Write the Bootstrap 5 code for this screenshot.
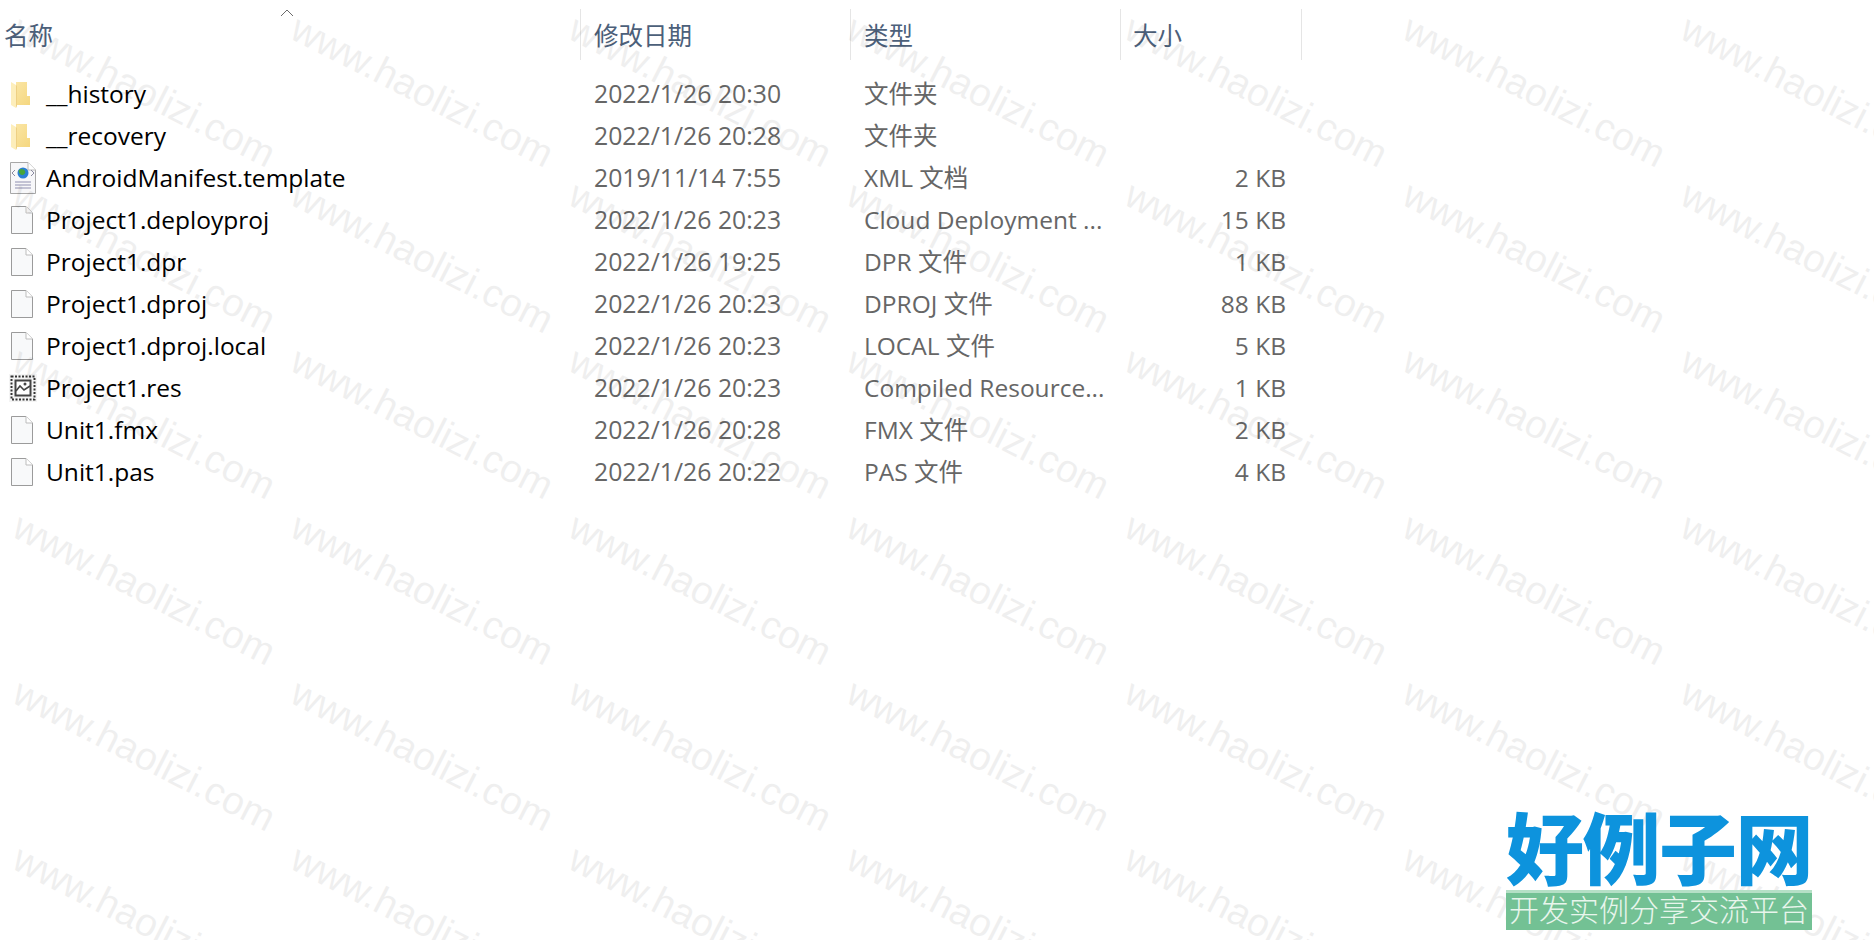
<!DOCTYPE html>
<html lang="zh-CN">
<head>
    <meta charset="UTF-8">
    <title>文件列表</title>
    <link href="https://cdn.jsdelivr.net/npm/bootstrap@5.3.0/dist/css/bootstrap.min.css" rel="stylesheet">
    <style>
        body {
            background-color: #fff;
            font-family: "Open Sans", "Noto Sans CJK SC", sans-serif;
            font-size: 24.5px;
            overflow: hidden;
            height: 940px;
        }
        .file-head { height: 73px; padding-top: 9px; color: #4c607a; position: relative; }
        .file-head .col-cell { height: 51px; border-right: 1px solid #e5e5e5; padding-top: 4px; }
        .file-row { height: 42px; color: #000; }
        .col-cell { flex: none; white-space: nowrap; overflow: hidden; }
        .col-name { width: 581px; }
        .col-date { width: 270px; padding-left: 13px; }
        .col-type { width: 270px; padding-left: 13px; }
        .col-size { width: 181px; padding-right: 16px; text-align: right; }
        .file-head .col-size { padding-left: 12px; }
        .file-row .col-date { font-size: 24.8px; }
        .file-row .col-date, .file-row .col-type, .file-row .col-size { color: #666; }
        .file-head .col-name { padding-left: 4px; }
        .file-icon { width: 46px; flex: none; }
        .sort-caret { position: absolute; left: 280px; top: 9px; }
        .wm-layer { position: absolute; inset: 0; overflow: hidden; pointer-events: none; }
        .wm-text {
            position: absolute;
            font-family: "Liberation Sans", sans-serif;
            font-size: 39px;
            color: #000;
            opacity: .06;
            white-space: nowrap;
            transform: rotate(27deg);
            transform-origin: 0 0;
        }
        .site-logo { position: absolute; left: 1506px; top: 801px; width: 306px; }
        .logo-name {
            font-family: "Noto Sans CJK SC", sans-serif;
            font-weight: 900;
            font-size: 78px;
            line-height: 89px;
            letter-spacing: -1.5px;
            color: #0d93dd;
            white-space: nowrap;
        }
        .logo-sub {
            background-color: #73c194;
            border-top: 3px solid #b5e0c6;
            height: 40px;
            color: #e8f5ec;
            font-family: "Noto Sans CJK SC", sans-serif;
            font-size: 30px;
            font-weight: 300;
            line-height: 31px;
            white-space: nowrap;
            text-align: center;
        }
    </style>
</head>
<body>
    <svg width="0" height="0" class="position-absolute">
        <defs>
            <linearGradient id="folderBack" x1="0" y1="0" x2="1" y2="1">
                <stop offset="0" stop-color="#fbe7a9"/>
                <stop offset="1" stop-color="#f5d77f"/>
            </linearGradient>
            <symbol id="icon-folder" viewBox="0 0 19 27">
                <path d="M1 1H16V15L19 15V24H5V1Z" fill="url(#folderBack)"/>
                <path d="M0 1L5 4V27L0 24Z" fill="#fdeebb"/>
                <path d="M5 4V27L6 25V5Z" fill="#eed084"/>
            </symbol>
            <symbol id="icon-file" viewBox="0 0 22 28">
                <path d="M.5.5H15L21.5 7V27.5H.5Z" fill="#f8f9fa" stroke="#9b9b9b"/>
                <path d="M15 .5V7H21.5" fill="#fff" stroke="#bdbdbd"/>
            </symbol>
            <symbol id="icon-xml" viewBox="0 0 26 32">
                <path d="M.5.5H18L25.5 8V31.5H.5Z" fill="#f7f7f9" stroke="#a8a8a8"/>
                <path d="M18 .5V8H25.5" fill="#fff" stroke="#bdbdbd"/>
                <circle cx="13" cy="11" r="5.5" fill="#2b7fd4"/>
                <path d="M9 8c2-2 5-1 6 1s-1 4-3 4-4-3-3-5Z" fill="#46a538"/>
                <path d="M5 8L2 11L5 14M21 8L24 11L21 14" fill="none" stroke="#8a8aa0"/>
                <path d="M5 20H21M5 23H21M5 26H21" stroke="#8f8fb0"/>
            </symbol>
            <symbol id="icon-res" viewBox="0 0 28 28">
                <rect width="28" height="28" fill="#f4f4f4"/>
                <rect x="2.5" y="2.5" width="23" height="23" fill="none" stroke="#333" stroke-width="2" stroke-dasharray="2 1.5"/>
                <rect x="6.5" y="6.5" width="15" height="15" fill="#fff" stroke="#444" stroke-width="2"/>
                <path d="M7 17L11 12L15 16L21 12" fill="none" stroke="#444" stroke-width="1.6"/>
                <circle cx="16" cy="10" r="1.5" fill="#444"/>
            </symbol>
        </defs>
    </svg>

    <div class="file-head d-flex">
        <div class="col-cell col-name d-flex align-items-center">名称</div>
        <div class="col-cell col-date d-flex align-items-center">修改日期</div>
        <div class="col-cell col-type d-flex align-items-center">类型</div>
        <div class="col-cell col-size d-flex align-items-center">大小</div>
        <svg class="sort-caret" width="14" height="8" viewBox="0 0 14 8"><path d="M1 7L7 1L13 7" fill="none" stroke="#6b6b6b"/></svg>
    </div>
    <div id="file-list"></div>

    <div class="wm-layer" id="wm-layer"></div>

    <div class="site-logo">
        <div class="logo-name">好例子网</div>
        <div class="logo-sub">开发实例分享交流平台</div>
    </div>

    <script>
        const files = [
            { name: '__history', date: '2022/1/26 20:30', type: '文件夹', size: '', icon: 'folder' },
            { name: '__recovery', date: '2022/1/26 20:28', type: '文件夹', size: '', icon: 'folder' },
            { name: 'AndroidManifest.template', date: '2019/11/14 7:55', type: 'XML 文档', size: '2 KB', icon: 'xml' },
            { name: 'Project1.deployproj', date: '2022/1/26 20:23', type: 'Cloud Deployment ...', size: '15 KB', icon: 'file' },
            { name: 'Project1.dpr', date: '2022/1/26 19:25', type: 'DPR 文件', size: '1 KB', icon: 'file' },
            { name: 'Project1.dproj', date: '2022/1/26 20:23', type: 'DPROJ 文件', size: '88 KB', icon: 'file' },
            { name: 'Project1.dproj.local', date: '2022/1/26 20:23', type: 'LOCAL 文件', size: '5 KB', icon: 'file' },
            { name: 'Project1.res', date: '2022/1/26 20:23', type: 'Compiled Resource...', size: '1 KB', icon: 'res' },
            { name: 'Unit1.fmx', date: '2022/1/26 20:28', type: 'FMX 文件', size: '2 KB', icon: 'file' },
            { name: 'Unit1.pas', date: '2022/1/26 20:22', type: 'PAS 文件', size: '4 KB', icon: 'file' }
        ];
        const iconSizes = {
            folder: [19, 27, 11],
            file: [22, 28, 11],
            xml: [26, 32, 10],
            res: [28, 28, 9]
        };

        document.getElementById("file-list").innerHTML = files.map(file => {
            const [w, h, left] = iconSizes[file.icon];
            return `
                <div class="file-row d-flex align-items-center">
                    <div class="col-cell col-name d-flex align-items-center">
                        <div class="file-icon d-flex align-items-center" style="padding-left:${left}px">
                            <svg width="${w}" height="${h}"><use href="#icon-${file.icon}"/></svg>
                        </div>
                        <span>${file.name}</span>
                    </div>
                    <div class="col-cell col-date">${file.date}</div>
                    <div class="col-cell col-type">${file.type}</div>
                    <div class="col-cell col-size">${file.size}</div>
                </div>`;
        }).join("");

        // watermark tiles repeat every 278 x 166
        let marks = "";
        for (let y = 0; y < 940; y += 166) {
            for (let x = 29; x < 1874; x += 278) {
                marks += `<span class="wm-text" style="left:${x}px;top:${y}px">www.haolizi.com</span>`;
            }
        }
        document.getElementById("wm-layer").innerHTML = marks;
    </script>
    <script src="https://cdn.jsdelivr.net/npm/bootstrap@5.3.0/dist/js/bootstrap.bundle.min.js"></script>
</body>
</html>
